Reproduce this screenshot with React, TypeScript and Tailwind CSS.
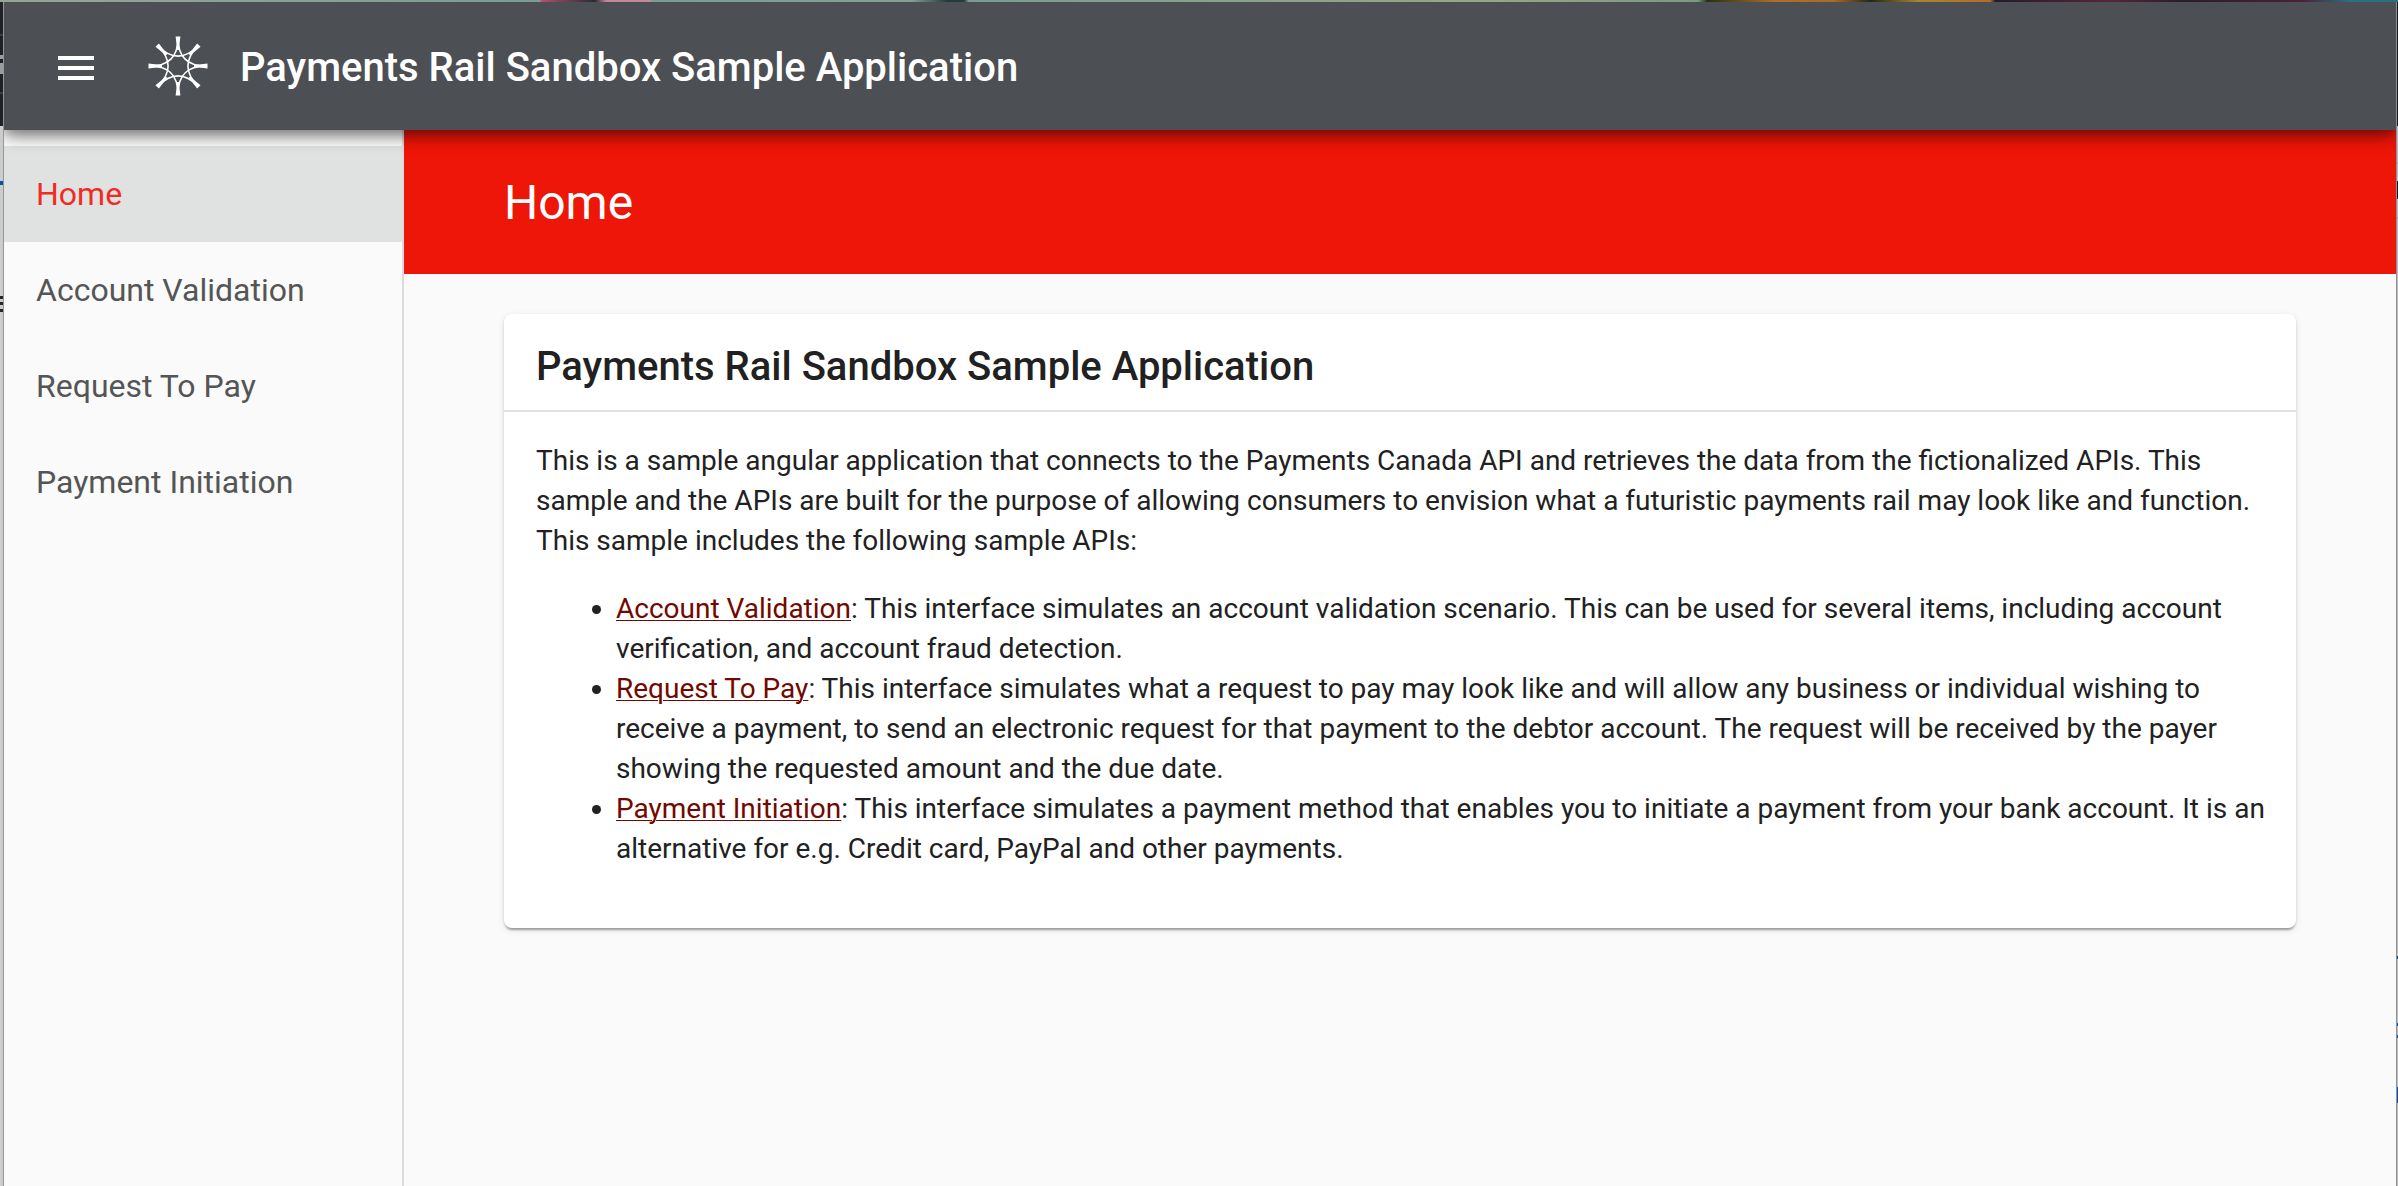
import React from "react";

const links = ["Home", "Account Validation", "Request To Pay", "Payment Initiation"];

const apis = [
  {
    name: "Account Validation",
    text: "This interface simulates an account validation scenario. This can be used for several items, including account verification, and account fraud detection.",
  },
  {
    name: "Request To Pay",
    text: "This interface simulates what a request to pay may look like and will allow any business or individual wishing to receive a payment, to send an electronic request for that payment to the debtor account. The request will be received by the payer showing the requested amount and the due date.",
  },
  {
    name: "Payment Initiation",
    text: "This interface simulates a payment method that enables you to initiate a payment from your bank account. It is an alternative for e.g. Credit card, PayPal and other payments.",
  },
];

function MenuIcon() {
  return (
    <svg viewBox="0 0 48 48" className="size-12" fill="currentColor" aria-hidden="true">
      <path d="M6 12h36v4H6zM6 22h36v4H6zM6 32h36v4H6z" />
    </svg>
  );
}

function Logo() {
  return (
    <svg viewBox="-30 -30 60 60" className="size-15" aria-hidden="true">
      {[0, 45, 90, 135, 180, 225, 270, 315].map((angle) => (
        <g key={angle} transform={`rotate(${angle})`}>
          <path d="M0 -28Q0 0 28 0" fill="none" stroke="white" strokeWidth="1.5" />
          <path d="M-2.4 -29.5H2.4L1.4 -21L1.2 -16H-1.2L-1.4 -21Z" fill="white" />
        </g>
      ))}
    </svg>
  );
}

export default function App() {
  return (
    <div className="flex min-h-screen flex-col bg-[#c8c9c8] font-[Roboto,sans-serif] text-[#212121]">
      <div className="h-0.5 bg-[linear-gradient(90deg,#94a696_0%,#7c9c92_22.5%,#b05068_22.6%,#292a35_24.8%,#c08a98_25.3%,#c08a98_27.1%,#7c9c92_27.2%,#84a094_38%,#263a3c_39.5%,#263a3c_40.2%,#7c9c92_40.4%,#94a686_62%,#7c9884_70.8%,#263018_71.2%,#b06e28_74%,#a86a28_76.5%,#202a14_78%,#a88430_80%,#b06e28_83%,#241c2c_83.2%,#5a2438_88%,#281e2c_91%,#4a2038_96%,#2c7080_98%,#2c7080_100%)]" />
      <div className="flex grow">
        <div className="w-1 shrink-0 border-r border-[#969696] bg-[linear-gradient(#1e2126_0_32px,#3a3d42_32px_34px,#1e2126_34px_53px,#9a9c9e_53px_57px,#1e2126_57px_61px,#9a9c9e_61px_72px,#1e2126_72px_90px,#3a3d42_90px_92px,#1e2126_92px_124px,#cbcccb_124px_179px,#0a50a8_179px_183px,#cbcccb_183px_294px,#25282b_294px_297px,#cbcccb_297px_300px,#25282b_300px_303px,#cbcccb_303px_307px,#25282b_307px_310px,#cbcccb_310px)]" />
        <div className="flex min-w-0 grow flex-col overflow-hidden bg-[#fafafa]">
          <header className="relative z-10 flex h-32 items-center bg-[#4c4f53] pl-12 text-white shadow-[0_8px_16px_-2px_rgba(0,0,0,0.35),0_4px_10px_rgba(0,0,0,0.2),0_2px_20px_rgba(0,0,0,0.12)]">
            <button type="button" aria-label="Toggle menu" className="flex pt-1">
              <MenuIcon />
            </button>
            <div className="ml-12">
              <Logo />
            </div>
            <span className="ml-8 pt-1 text-[40px] leading-[64px] font-medium">
              Payments Rail Sandbox Sample Application
            </span>
          </header>
          <div className="flex grow">
            <nav className="w-[400px] shrink-0 border-r-2 border-[#dcdcdc] pt-4">
              {links.map((label, i) => (
                <a
                  key={label}
                  href="#"
                  aria-current={i === 0 ? "page" : undefined}
                  className={
                    i === 0
                      ? "flex h-24 items-center bg-[#e0e2e1] px-8 text-[32px] text-[#f02b22]"
                      : "flex h-24 items-center px-8 text-[32px] text-[#555555]"
                  }
                >
                  {label}
                </a>
              ))}
            </nav>
            <main className="min-w-0 grow">
              <h1 className="flex h-36 items-center bg-[#ed1608] px-[100px] pt-0.5 text-5xl text-white">Home</h1>
              <section className="mx-[100px] mt-10 rounded-lg bg-white pb-8 shadow-[0_4px_2px_-2px_rgba(0,0,0,0.2),0_2px_2px_rgba(0,0,0,0.14),0_2px_6px_rgba(0,0,0,0.12)]">
                <h2 className="flex h-[98px] items-center border-b-2 border-[#e0e0e0] px-8 pt-2.5 text-[40px] leading-[64px] font-medium">
                  Payments Rail Sandbox Sample Application
                </h2>
                <div className="pt-[29px] pr-6 pb-[27px] pl-8 text-[28px] leading-10">
                  <p>
                    This is a sample angular application that connects to the Payments Canada API and retrieves the data
                    from the fictionalized APIs. This sample and the APIs are built for the purpose of allowing consumers
                    to envision what a futuristic payments rail may look like and function. This sample includes the
                    following sample APIs:
                  </p>
                  <ul className="mt-7 list-disc pl-20">
                    {apis.map((api) => (
                      <li key={api.name}>
                        <a href="#" className="text-[#720800] underline decoration-1 underline-offset-2">
                          {api.name}
                        </a>
                        : {api.text}
                      </li>
                    ))}
                  </ul>
                </div>
              </section>
            </main>
          </div>
        </div>
        <div className="w-0.5 shrink-0 border-l border-[#8f9194] bg-[linear-gradient(#15191e_0_124px,#bcbec0_124px_160px,#a4a6a8_160px_162px,#bcbec0_162px_179px,#15191e_179px_197px,#bcbec0_197px_215px,#a4a6a8_215px_217px,#bcbec0_217px_954px,#0a50a8_954px_957px,#bcbec0_957px_1021px,#0a50a8_1021px_1024px,#bcbec0_1024px_1033px,#0a50a8_1033px_1036px,#bcbec0_1036px_1085px,#0a50a8_1085px_1101px,#bcbec0_1101px)]" />
      </div>
    </div>
  );
}
